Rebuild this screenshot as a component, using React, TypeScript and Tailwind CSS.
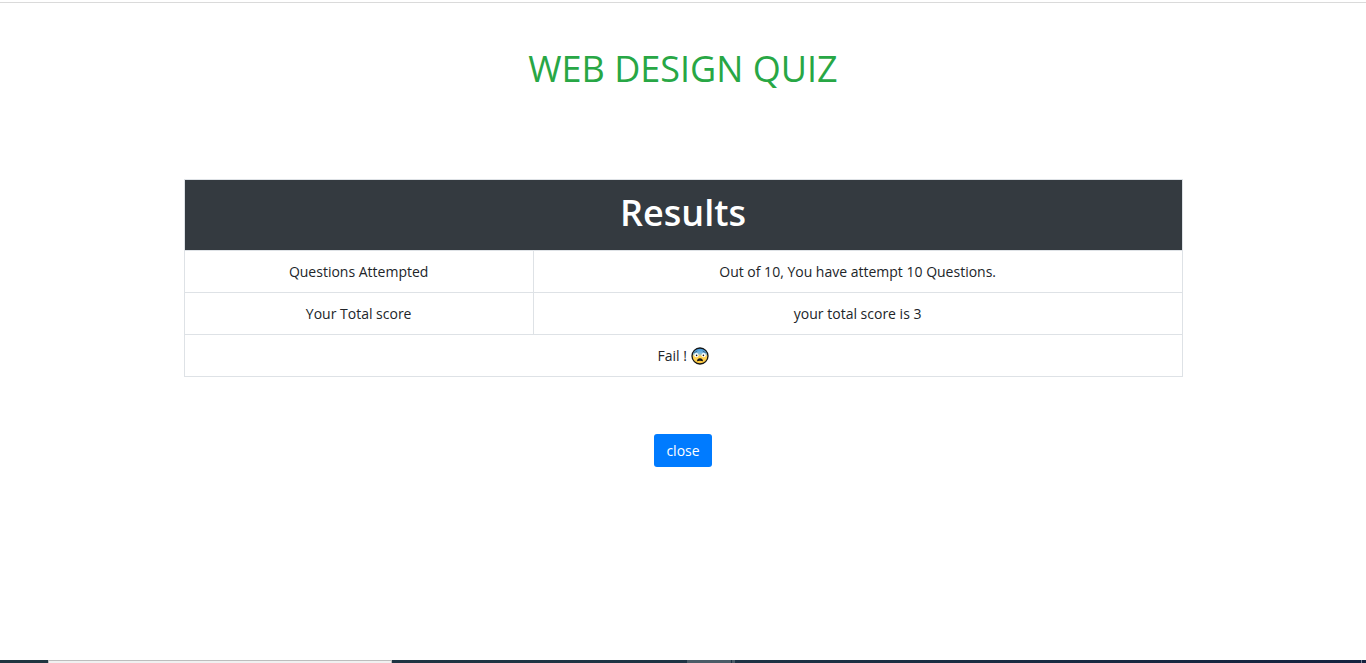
function FearfulFace() {
  return (
    <svg role="img" aria-label="Fearful face" viewBox="0 0 18 18" className="inline-block size-[18px] align-[-4px]">
      <defs>
        <linearGradient id="face" x1="0" y1="0" x2="0" y2="1">
          <stop offset="0.1" stopColor="#4b9fe0" />
          <stop offset="0.36" stopColor="#8cc0dc" />
          <stop offset="0.52" stopColor="#ffd45a" />
          <stop offset="1" stopColor="#ffc83d" />
        </linearGradient>
      </defs>
      <circle cx="9" cy="9" r="8" fill="url(#face)" stroke="#151515" strokeWidth="1.3" />
      <path d="M3.2 5.8 6.3 4M14.8 5.8 11.7 4" stroke="#2c587a" strokeWidth="0.8" fill="none" />
      <circle cx="5.4" cy="8.2" r="2.1" fill="#fff" />
      <circle cx="12.6" cy="8.2" r="2.1" fill="#fff" />
      <circle cx="5.6" cy="8.4" r="0.8" fill="#151515" />
      <circle cx="12.4" cy="8.4" r="0.8" fill="#151515" />
      <path d="M6 14.2C6 12.2 7.4 11.2 9 11.2S12 12.2 12 14.2C10.5 13.5 7.5 13.5 6 14.2Z" fill="#151515" />
    </svg>
  );
}

const rows = [
  { label: "Questions Attempted", value: "Out of 10, You have attempt 10 Questions." },
  { label: "Your Total score", value: "your total score is 3" },
];

export default function App() {
  return (
    <div className="flex min-h-screen flex-col bg-white font-['Open_Sans','Noto_Sans',sans-serif] text-sm text-[#212529]">
      <div className="mt-0.5 h-px bg-[#dadada]" />
      <main className="mx-auto flex w-full max-w-[999px] grow flex-col items-center pt-11">
        <h1 className="text-4xl leading-[44px] font-medium text-[#28a745]">WEB DESIGN QUIZ</h1>
        <table className="mt-[88px] w-full table-fixed border-collapse text-center">
          <colgroup>
            <col className="w-[35%]" />
            <col />
          </colgroup>
          <thead>
            <tr>
              <th colSpan={2} className="h-[71px] border border-[#dee2e6] bg-[#343a40] pb-1 text-4xl leading-[44px] font-semibold text-white">
                Results
              </th>
            </tr>
          </thead>
          <tbody>
            {rows.map((row) => (
              <tr key={row.label}>
                <td className="h-[42px] border border-[#dee2e6] px-3 leading-5">{row.label}</td>
                <td className="h-[42px] border border-[#dee2e6] px-3 leading-5">{row.value}</td>
              </tr>
            ))}
            <tr>
              <td colSpan={2} className="h-[42px] border border-[#dee2e6] px-3 leading-5">
                Fail ! <FearfulFace />
              </td>
            </tr>
          </tbody>
        </table>
        <button type="button" className="mt-[57px] h-[33px] rounded-[3px] bg-[#007bff] px-3 text-white">
          close
        </button>
      </main>
      <div className="flex h-[3px] bg-linear-to-r from-[#1f3540] via-[#1d3444] to-[#14223f]">
        <div className="w-[3.5%]" />
        <div className="w-[25.2%] border-x border-t border-[#bdbdbd] bg-[#f0f0f0]" />
        <div className="w-[21.6%]" />
        <div className="w-[3.2%] bg-[#4a5c67]" />
        <div className="ml-px w-[3px] bg-[#4a5c67]" />
        <div className="mr-1 ml-auto w-px bg-[#7b859a]" />
      </div>
    </div>
  );
}
